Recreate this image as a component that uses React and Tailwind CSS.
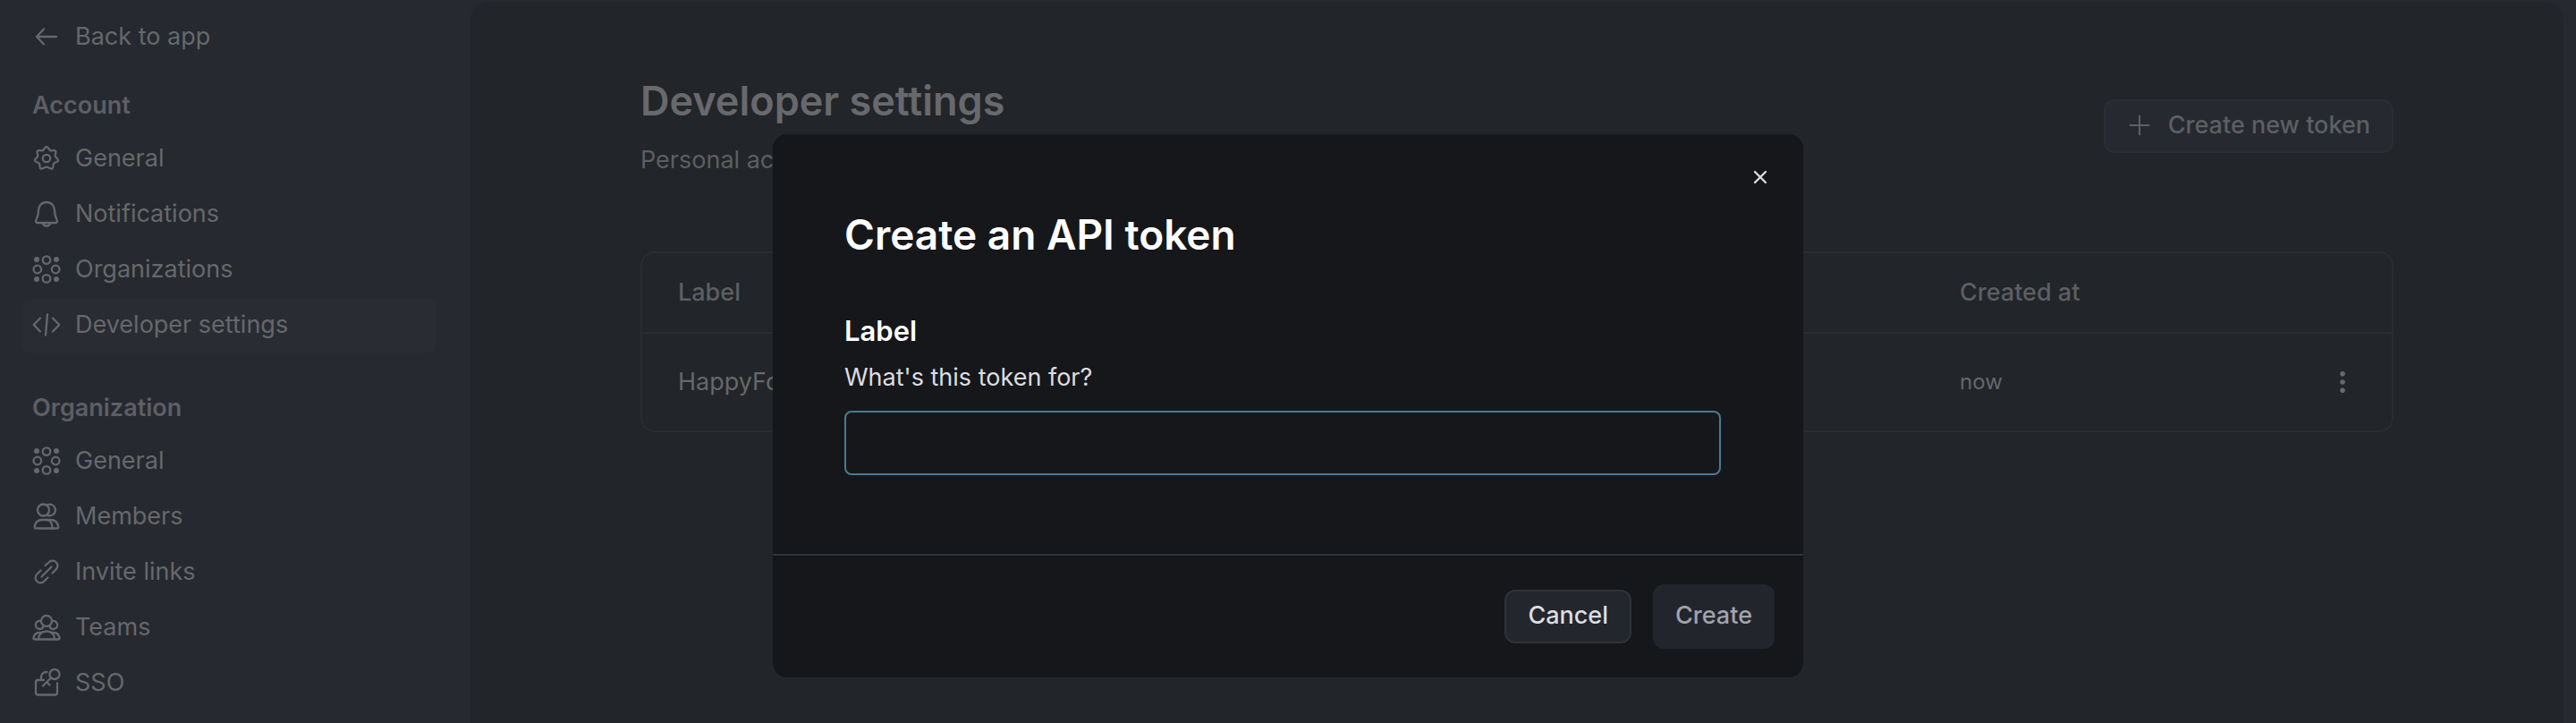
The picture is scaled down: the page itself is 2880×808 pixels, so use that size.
import React, { useState } from 'react';

const Svg = ({ children, size = 32 }) => (
  <svg
    width={size}
    height={size}
    viewBox="0 0 32 32"
    fill="none"
    stroke="currentColor"
    strokeWidth="2.3"
    strokeLinecap="round"
    strokeLinejoin="round"
    className="shrink-0"
    aria-hidden="true"
  >
    {children}
  </svg>
);

const ArrowLeftIcon = () => (
  <Svg>
    <path d="M27 16H5M13 7.500L5 16l8 8.500" />
  </Svg>
);

const GearIcon = () => (
  <Svg>
    <circle cx="16" cy="16" r="4.200" />
    <path d="M16 3C17.800 3 18.400 6.300 20.200 7.100C22 8 24.800 6.200 26.100 7.600C27.400 9 25.300 11.500 25.800 13.500C26.300 15.400 29.400 16.500 29 18.400C28.600 20.300 25.400 20.100 24.100 21.700C22.900 23.200 24.200 26.500 22.400 27.500C20.600 28.500 18.600 25.700 16 25.700C13.400 25.700 11.400 28.500 9.600 27.500C7.800 26.500 9.100 23.200 7.900 21.700C6.600 20.100 3.400 20.300 3 18.400C2.600 16.500 5.700 15.400 6.200 13.500C6.700 11.500 4.600 9 5.900 7.600C7.200 6.200 10 8 11.800 7.100C13.600 6.300 14.200 3 16 3Z" />
  </Svg>
);

const BellIcon = () => (
  <Svg>
    <path d="M16 3C10.500 3 7 7 7 12.500C7 17.500 6 19.500 4.500 22.500C3.500 24.800 4.300 26 6 26H26C27.700 26 28.500 24.800 27.500 22.500C26 19.500 25 17.500 25 12.500C25 7 21.500 3 16 3Z" />
    <path d="M11.500 26.500C12.500 28.700 14 29.500 16 29.500S19.500 28.700 20.500 26.500" />
  </Svg>
);

const OrgIcon = () => (
  <Svg>
    <circle cx="16" cy="5.600" r="4.300" />
    <circle cx="5.800" cy="16" r="4.300" />
    <circle cx="26.200" cy="16" r="4.300" />
    <circle cx="16" cy="26.400" r="4.300" />
    <g fill="currentColor" stroke="none">
      <circle cx="5" cy="5" r="3" />
      <circle cx="27" cy="5" r="3" />
      <circle cx="5" cy="27" r="3" />
      <circle cx="27" cy="27" r="3" />
    </g>
  </Svg>
);

const CodeIcon = () => (
  <Svg>
    <path d="M9 8.500L1.700 16L9 23.500M23 8.500L30.300 16L23 23.500M17 4.500L15 27.500" />
  </Svg>
);

const MembersIcon = () => (
  <Svg>
    <circle cx="12.500" cy="9" r="6.500" />
    <path d="M17 3.200C21.500 1.500 26 4.800 26 9S21.500 16.500 17 14.800" />
    <path d="M10.500 20H16C19.500 20 22.500 23 22.500 29.500H4.500C3 29.500 2.500 28.500 2.800 27C3.800 22.500 6.500 20 10.500 20Z" />
    <path d="M16 20H20.500C25 20 28.200 22.500 29.200 27C29.500 28.500 29 29.500 27.500 29.500H22" />
  </Svg>
);

const LinkIcon = () => (
  <Svg>
    <path d="M10.500 21.500L21.500 10.500" />
    <path d="M14.500 9L18.500 5.500C21 3 24.500 3 26.700 5.300C29 7.500 29 11 26.500 13.500L22.500 17.500" />
    <path d="M9.500 14.500L5.500 18.500C3 21 3 24.500 5.300 26.700C7.500 29 11 29 13.500 26.500L17.500 22.500" />
  </Svg>
);

const TeamsIcon = () => (
  <Svg>
    <circle cx="16" cy="9" r="6" />
    <path d="M9.500 9C6 8.500 3.800 10.800 3.800 13.300C3.800 16 6 18 8.500 18C10 18 11.200 17.500 12 16.500L12.500 14" />
    <path d="M22.500 9C26 8.500 28.200 10.800 28.200 13.300C28.200 16 26 18 23.500 18C22 18 20.800 17.500 20 16.500L19.500 14" />
    <path d="M7 29.500C7 24 10.500 20.500 16 20.500S25 24 25 29.500" />
    <path d="M11 22H8C4.500 22 2.500 24 1.500 27.500C1.200 28.800 1.800 29.500 3 29.500H29C30.200 29.500 30.800 28.800 30.500 27.500C29.500 24 27.500 22 24 22H21" />
  </Svg>
);

const SsoIcon = () => (
  <Svg>
    <circle cx="25" cy="6.500" r="5.500" />
    <path d="M21 10.500L12 19.500M16.500 15.500L19.500 18.500" />
    <path d="M28 16.500V27C28 28.700 27.200 29.500 25.500 29.500H6.500C4.800 29.500 4 28.700 4 27V15.500C4 13.800 4.800 13 6.500 13H13" />
    <path d="M10 13V10C10 6.500 12.500 4 16.500 4" />
  </Svg>
);

const sections = [
  {
    title: 'Account',
    items: [
      { label: 'General', icon: GearIcon },
      { label: 'Notifications', icon: BellIcon },
      { label: 'Organizations', icon: OrgIcon },
      { label: 'Developer settings', icon: CodeIcon, active: true },
    ],
  },
  {
    title: 'Organization',
    items: [
      { label: 'General', icon: OrgIcon },
      { label: 'Members', icon: MembersIcon },
      { label: 'Invite links', icon: LinkIcon },
      { label: 'Teams', icon: TeamsIcon },
      { label: 'SSO', icon: SsoIcon },
    ],
  },
];

function NavItem({ label, icon: Icon, active }) {
  return (
    <a
      href="#"
      className={`flex h-[60px] items-center gap-4 rounded-lg px-3 pb-0.5 text-[27px] ${
        active ? 'bg-[#292c33]' : ''
      }`}
    >
      <Icon />
      <span>{label}</span>
    </a>
  );
}

function Sidebar() {
  return (
    <aside className="w-[524px] shrink-0 pt-3 pr-9 pl-6 text-[#66686b]">
      <NavItem label="Back to app" icon={ArrowLeftIcon} />
      <div className="mt-[18px] flex flex-col gap-[34px]">
        {sections.map((section) => (
          <nav key={section.title} aria-label={section.title}>
            <h2 className="flex h-[58px] items-center px-3 pb-0.5 text-[27px] font-semibold text-[#5d5f63]">
              {section.title}
            </h2>
            <div className="flex flex-col gap-0.5">
              {section.items.map((item) => (
                <NavItem key={item.label} {...item} />
              ))}
            </div>
          </nav>
        ))}
      </div>
    </aside>
  );
}

function DeveloperSettings() {
  return (
    <main className="mr-3 min-w-0 flex-1 rounded-t-3xl border-2 border-b-0 border-[#26292e] bg-[#222529]">
      <div className="mx-auto max-w-[1960px] pt-[81px]">
        <div className="flex items-start justify-between">
          <div>
            <h1 className="text-[45px] leading-[60px] font-semibold text-[#68696c]">Developer settings</h1>
            <p className="mt-4 text-[27px] leading-10 text-[#5d5f63]">Personal access tokens</p>
          </div>
          <button
            type="button"
            className="mt-7 flex h-[60px] items-center gap-[18px] rounded-xl border-2 border-[#2a2d34] bg-[#262930] px-6 pb-0.5 text-[27px] font-medium text-[#5d5f63]"
          >
            <Svg size={28}>
              <path d="M16 4v24M4 16h24" />
            </Svg>
            Create new token
          </button>
        </div>

        <div className="mt-[82px] rounded-2xl border-2 border-[#292c31]">
          <table className="w-full table-fixed border-separate border-spacing-0 text-left text-[27px]">
            <thead>
              <tr className="h-[90px] text-[#5d5f63]">
                <th className="border-b-2 border-[#292c31] pl-10 font-medium">Label</th>
                <th className="w-[360px] border-b-2 border-[#292c31] font-medium">Created at</th>
                <th className="w-[123px] border-b-2 border-[#292c31]" aria-label="Actions" />
              </tr>
            </thead>
            <tbody>
              <tr className="h-[108px] text-[#66686b]">
                <td className="pl-10">HappyFox</td>
                <td className="text-2xl">now</td>
                <td>
                  <button type="button" aria-label="Token options" className="ml-[54px] block">
                    <svg width="28" height="32" viewBox="0 0 28 32" fill="currentColor">
                      <circle cx="14" cy="6.700" r="2.800" />
                      <circle cx="14" cy="16" r="2.800" />
                      <circle cx="14" cy="25.300" r="2.800" />
                    </svg>
                  </button>
                </td>
              </tr>
            </tbody>
          </table>
        </div>
      </div>
    </main>
  );
}

function CreateTokenDialog() {
  const [label, setLabel] = useState('');

  return (
    <div className="absolute inset-x-0 top-0 flex justify-center pt-[150px]">
      <form
        role="dialog"
        aria-labelledby="dialog-title"
        onSubmit={(e) => e.preventDefault()}
        className="relative w-full max-w-[1152px] rounded-2xl bg-[#16171b]"
      >
        <button type="button" aria-label="Close" className="absolute top-8 right-8 text-[#dddee0]">
          <Svg>
            <path d="M10 10l12 12M22 10L10 22" />
          </Svg>
        </button>

        <div className="pt-[82px] pr-[92px] pb-[88px] pl-20">
          <h2 id="dialog-title" className="text-[46px] leading-[60px] font-semibold text-white">
            Create an API token
          </h2>
          <label htmlFor="token-label" className="mt-[58px] block text-[31px] leading-10 font-semibold text-white">
            Label
          </label>
          <p id="token-hint" className="mt-3 text-[27px] leading-10 text-[#dcdde0]">
            What's this token for?
          </p>
          <input
            id="token-label"
            type="text"
            aria-describedby="token-hint"
            value={label}
            onChange={(e) => setLabel(e.target.value)}
            className="mt-[17px] block h-[72px] w-full rounded-lg border-2 border-[#487c91] bg-transparent px-5 text-[27px] text-white outline-none"
          />
        </div>

        <div className="flex items-center justify-end gap-6 border-t-2 border-[#2d3338] p-8">
          <button
            type="button"
            className="h-[60px] rounded-xl border-2 border-[#2d3338] bg-[#23262d] px-6 pb-0.5 text-[27px] font-medium text-[#dcdde0]"
          >
            Cancel
          </button>
          <button
            type="submit"
            className="h-[72px] rounded-xl bg-[#23252d] px-[25px] pb-0.5 text-[27px] font-medium text-[#a1a4ab]"
          >
            Create
          </button>
        </div>
      </form>
    </div>
  );
}

export default function App() {
  return (
    <div className="relative flex h-screen overflow-hidden bg-[#262930] font-[Inter,sans-serif]">
      <Sidebar />
      <DeveloperSettings />
      <CreateTokenDialog />
    </div>
  );
}
